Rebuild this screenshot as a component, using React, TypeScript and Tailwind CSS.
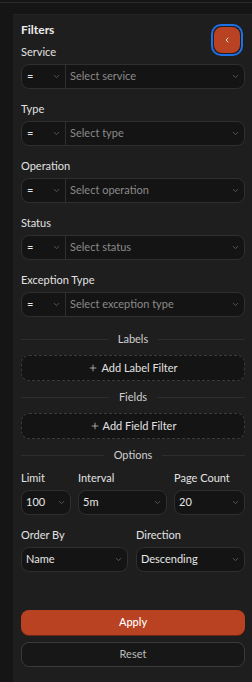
import { ChevronDown, ChevronLeft, Plus } from "lucide-react";

function Chevron() {
  return <ChevronDown className="h-[9px] w-[9px] text-[#6b6b6b]" strokeWidth={2} />;
}

function OpSelect({ placeholder }: { placeholder: string }) {
  return (
    <div className="flex h-[25px] items-stretch rounded-[8px] border border-[#2f2f2f] bg-[#141414]">
      <div className="flex w-[44px] items-center justify-between border-r border-[#2f2f2f] pl-[5px] pr-[4px]">
        <span className="text-[11px] text-[#e6e6e6]">=</span>
        <Chevron />
      </div>
      <div className="flex flex-1 items-center justify-between pl-[4px] pr-[4px]">
        <span className="text-[11px] text-[#8a8a8a]">{placeholder}</span>
        <Chevron />
      </div>
    </div>
  );
}

function ValueSelect({ value, className }: { value: string; className?: string }) {
  return (
    <div
      className={`flex h-[25px] items-center justify-between rounded-[8px] border border-[#2f2f2f] bg-[#141414] pl-[4px] pr-[4px] ${className ?? ""}`}
    >
      <span className="text-[11px] text-[#e6e6e6]">{value}</span>
      <Chevron />
    </div>
  );
}

function Label({ children }: { children: React.ReactNode }) {
  return <div className="h-[16px] text-[11px] leading-[16px] text-[#e2e2e2]">{children}</div>;
}

function Divider({ title }: { title: string }) {
  return (
    <div className="flex h-[16px] items-center gap-[10px]">
      <div className="h-px flex-1 bg-[#2e2e2e]" />
      <span className="text-[11px] text-[#cfcfcf]">{title}</span>
      <div className="h-px flex-1 bg-[#2e2e2e]" />
    </div>
  );
}

function AddButton({ label }: { label: string }) {
  return (
    <button className="flex h-[26px] w-full items-center justify-center gap-[3px] rounded-[8px] border border-dashed border-[#3a3a3a] bg-[#141414] text-[11px] text-[#e2e2e2]">
      <Plus className="h-[10px] w-[10px]" strokeWidth={1.6} />
      {label}
    </button>
  );
}

const fields = [
  { label: "Service", placeholder: "Select service" },
  { label: "Type", placeholder: "Select type" },
  { label: "Operation", placeholder: "Select operation" },
  { label: "Status", placeholder: "Select status" },
  { label: "Exception Type", placeholder: "Select exception type" },
];

export default function App() {
  return (
    <div
      className="h-[682px] w-[252px] overflow-hidden bg-[#151515] pt-[2px]"
      style={{ fontFamily: "Lato, 'Noto Sans', sans-serif" }}
    >
      <div className="h-px bg-[#2a2a2a]" />
      <div className="relative ml-[13px] mt-[11px] h-[700px] border-t border-[#242424] bg-[#1e1e1e] pl-[8px] pr-[7px] pt-[7px]">
        <button className="absolute right-[9px] top-[9px] flex h-[32px] w-[32px] items-center justify-center rounded-[10px] border-[2px] border-[#1f6fe5] bg-[#1e1e1e] p-[1px]">
          <span className="flex h-full w-full items-center justify-center rounded-[8px] bg-[#b94222]">
            <ChevronLeft className="h-[8px] w-[8px] text-white" strokeWidth={2.5} />
          </span>
        </button>

        <div className="h-[16px] text-[12px] font-bold leading-[16px] text-[#ececec]">Filters</div>

        <div className="mt-[6px] flex flex-col gap-[12px]">
          {fields.map((f) => (
            <div key={f.label} className="flex flex-col gap-[4px]">
              <Label>{f.label}</Label>
              <OpSelect placeholder={f.placeholder} />
            </div>
          ))}
        </div>

        <div className="mt-[14px] flex flex-col gap-[8px]">
          <Divider title="Labels" />
          <AddButton label="Add Label Filter" />
          <Divider title="Fields" />
          <AddButton label="Add Field Filter" />
          <Divider title="Options" />
        </div>

        <div className="mt-[7px] flex gap-[7px]">
          <div className="flex w-[50px] flex-col gap-[4px]">
            <Label>Limit</Label>
            <ValueSelect value="100" />
          </div>
          <div className="flex flex-1 flex-col gap-[4px]">
            <Label>Interval</Label>
            <ValueSelect value="5m" />
          </div>
          <div className="flex w-[71px] flex-col gap-[4px]">
            <Label>Page Count</Label>
            <ValueSelect value="20" />
          </div>
        </div>

        <div className="mt-[12px] flex gap-[8px]">
          <div className="flex flex-1 flex-col gap-[4px]">
            <Label>Order By</Label>
            <ValueSelect value="Name" />
          </div>
          <div className="flex w-[109px] flex-col gap-[4px]">
            <Label>Direction</Label>
            <ValueSelect value="Descending" />
          </div>
        </div>

        <div className="mt-[38px] flex flex-col gap-[7px]">
          <button className="h-[25px] w-full rounded-[8px] bg-[#b94222] text-[11px] font-medium text-white shadow-[0_1px_0_#6e2412]">
            Apply
          </button>
          <button className="h-[25px] w-full rounded-[8px] border border-[#3a3a3a] bg-[#171717] text-[11px] text-[#bdbdbd]">
            Reset
          </button>
        </div>
      </div>
    </div>
  );
}
